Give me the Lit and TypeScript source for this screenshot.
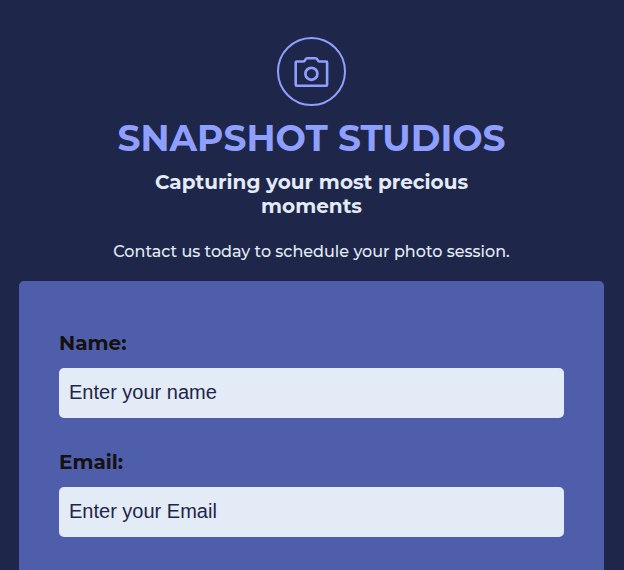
import { LitElement, html, css } from "lit";
import { customElement } from "lit/decorators.js";

@customElement("app-root")
export class AppRoot extends LitElement {
  static styles = css`
    :host {
      display: block;
      height: 570px;
      overflow: hidden;
      background: #1e264a;
      color: #e3ebf6;
      font-family: Montserrat, Inter, sans-serif;
    }
    * { box-sizing: border-box; }
    header {
      display: flex;
      flex-direction: column;
      align-items: center;
      width: 623px;
      padding-top: 37px;
      text-align: center;
    }
    .logo { display: block; width: 69px; height: 69px; }
    h1, h2, p { margin: 0; white-space: nowrap; }
    h1 {
      margin-top: 10px;
      color: #8f9fff;
      font-size: 36px;
      line-height: 44px;
      font-weight: 700;
    }
    h2 {
      margin-top: 10px;
      font-size: 20px;
      line-height: 24px;
      font-weight: 700;
    }
    p {
      margin-top: 22px;
      font-size: 16px;
      line-height: 24px;
      font-weight: 500;
    }
    form {
      width: 585px;
      height: 400px;
      margin: 17px 0 0 19px;
      padding: 50px 40px;
      border-radius: 5px;
      background: #4f5eaa;
    }
    .field { margin-bottom: 32px; }
    label {
      display: block;
      margin-bottom: 13px;
      color: #14110f;
      font-size: 20px;
      line-height: 24px;
      font-weight: 700;
    }
    input {
      display: block;
      width: 100%;
      height: 50px;
      padding: 0 10px 2px;
      border: 0;
      border-radius: 5px;
      background: #e3ebf6;
      font: 20px "Liberation Sans", Arial, sans-serif;
    }
    input::placeholder { color: #1e264a; opacity: 1; }
  `;

  render() {
    return html`
      <header>
        <svg class="logo" viewBox="0 0 69 69" fill="none" stroke="#8f9fff" stroke-width="2">
          <circle cx="34.5" cy="34.5" r="33.5" />
          <path stroke-width="2.6" stroke-linejoin="round"
            d="M19.7 24.5H26.2Q27.6 24.5 28.3 22.8Q29 21.3 30.4 21.3H38.4Q39.8 21.3 40.5 22.8Q41.2 24.5 42.6 24.5H49.1Q50.1 24.5 50.1 25.5V47.7Q50.1 48.7 49.1 48.7H19.7Q18.7 48.7 18.7 47.7V25.5Q18.7 24.5 19.7 24.5Z" />
          <circle cx="34.4" cy="36.8" r="6" stroke-width="2.7" />
        </svg>
        <h1>SNAPSHOT STUDIOS</h1>
        <h2>Capturing your most precious<br />moments</h2>
        <p>Contact us today to schedule your photo session.</p>
      </header>
      <form>
        <div class="field">
          <label for="name">Name:</label>
          <input id="name" type="text" placeholder="Enter your name" />
        </div>
        <div class="field">
          <label for="email">Email:</label>
          <input id="email" type="email" placeholder="Enter your Email" />
        </div>
      </form>
    `;
  }
}
